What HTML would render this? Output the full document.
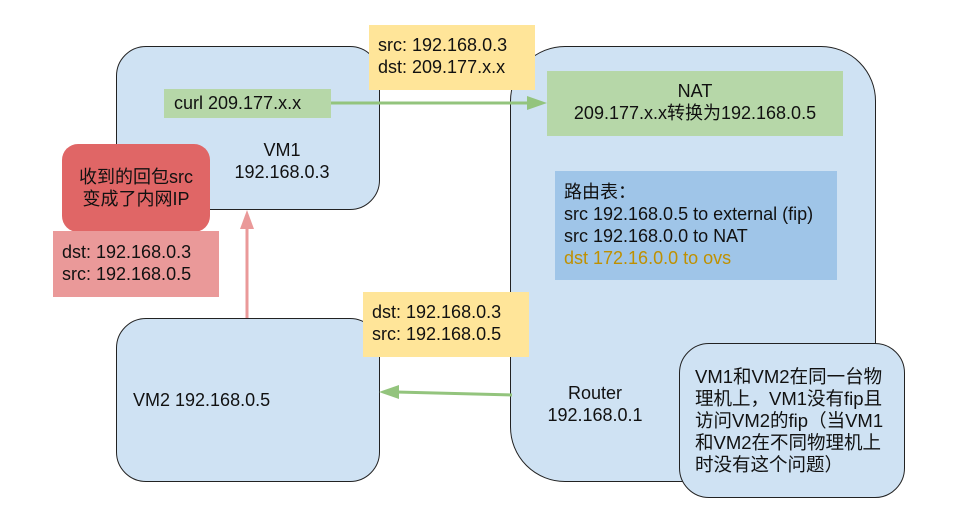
<!DOCTYPE html>
<html><head><meta charset="utf-8"><style>
body{margin:0;width:955px;height:516px;background:#fff;position:relative;overflow:hidden;font-family:"Liberation Sans","Noto Sans CJK SC",sans-serif;font-size:18px;color:#111}
.b{position:absolute;box-sizing:border-box}
.r{background:#cfe2f3;border:1.3px solid #222}
.t{position:absolute;white-space:nowrap;line-height:22px}
</style></head><body>
<div class="b r" style="left:116px;top:46px;width:264px;height:164px;border-radius:30px"></div>
<div class="b r" style="left:116px;top:318px;width:264px;height:164px;border-radius:30px"></div>
<div class="b r" style="left:510px;top:46px;width:366px;height:436px;border-radius:55px"></div>
<div class="b" style="left:164px;top:89px;width:167px;height:29px;background:#b6d7a8"></div>
<div class="t" style="left:174px;top:92px">curl 209.177.x.x</div>
<div class="t" style="left:222px;top:139px;width:120px;text-align:center">VM1<br>192.168.0.3</div>
<div class="b" style="left:62px;top:144px;width:148px;height:88px;background:#e06666;border-radius:16px"></div>
<div class="t" style="left:62px;top:166px;width:148px;text-align:center">收到的回包src<br>变成了内网IP</div>
<div class="b" style="left:53px;top:231px;width:166px;height:66px;background:#ea9999"></div>
<div class="t" style="left:62px;top:241px">dst: 192.168.0.3<br>src: 192.168.0.5</div>
<div class="b" style="left:369px;top:25px;width:166px;height:65px;background:#ffe599"></div>
<div class="t" style="left:378px;top:34px">src: 192.168.0.3<br>dst: 209.177.x.x</div>
<div class="b" style="left:547px;top:71px;width:296px;height:65px;background:#b6d7a8"></div>
<div class="t" style="left:547px;top:80px;width:296px;text-align:center">NAT<br>209.177.x.x转换为192.168.0.5</div>
<div class="b" style="left:555px;top:171px;width:282px;height:109px;background:#9fc5e8"></div>
<div class="t" style="left:564px;top:181px">路由表：<br>src 192.168.0.5 to external (fip)<br>src 192.168.0.0 to NAT<br><span style="color:#bf9000">dst 172.16.0.0 to ovs</span></div>
<div class="b" style="left:363px;top:292px;width:166px;height:65px;background:#ffe599"></div>
<div class="t" style="left:372px;top:301px">dst: 192.168.0.3<br>src: 192.168.0.5</div>
<div class="t" style="left:133px;top:389px">VM2 192.168.0.5</div>
<div class="t" style="left:530px;top:382px;width:130px;text-align:center">Router<br>192.168.0.1</div>
<div class="b r" style="left:679px;top:343px;width:226px;height:155px;border-radius:30px"></div>
<div class="t" style="left:695px;top:366px;font-size:18.5px">VM1和VM2在同一台物<br>理机上，VM1没有fip且<br>访问VM2的fip（当VM1<br>和VM2在不同物理机上<br>时没有这个问题）</div>
<svg style="position:absolute;left:0;top:0" width="955" height="516">
<line x1="331" y1="103" x2="530" y2="103" stroke="#93c47d" stroke-width="3"/>
<polygon points="527,96 547,103 527,110" fill="#93c47d"/>
<line x1="512" y1="395" x2="396" y2="392" stroke="#93c47d" stroke-width="3"/>
<polygon points="399,385 379,392 399,399" fill="#93c47d"/>
<line x1="247" y1="318" x2="247" y2="226" stroke="#ea9999" stroke-width="3"/>
<polygon points="240,229 247,210 254,229" fill="#ea9999"/>
</svg>
</body></html>
